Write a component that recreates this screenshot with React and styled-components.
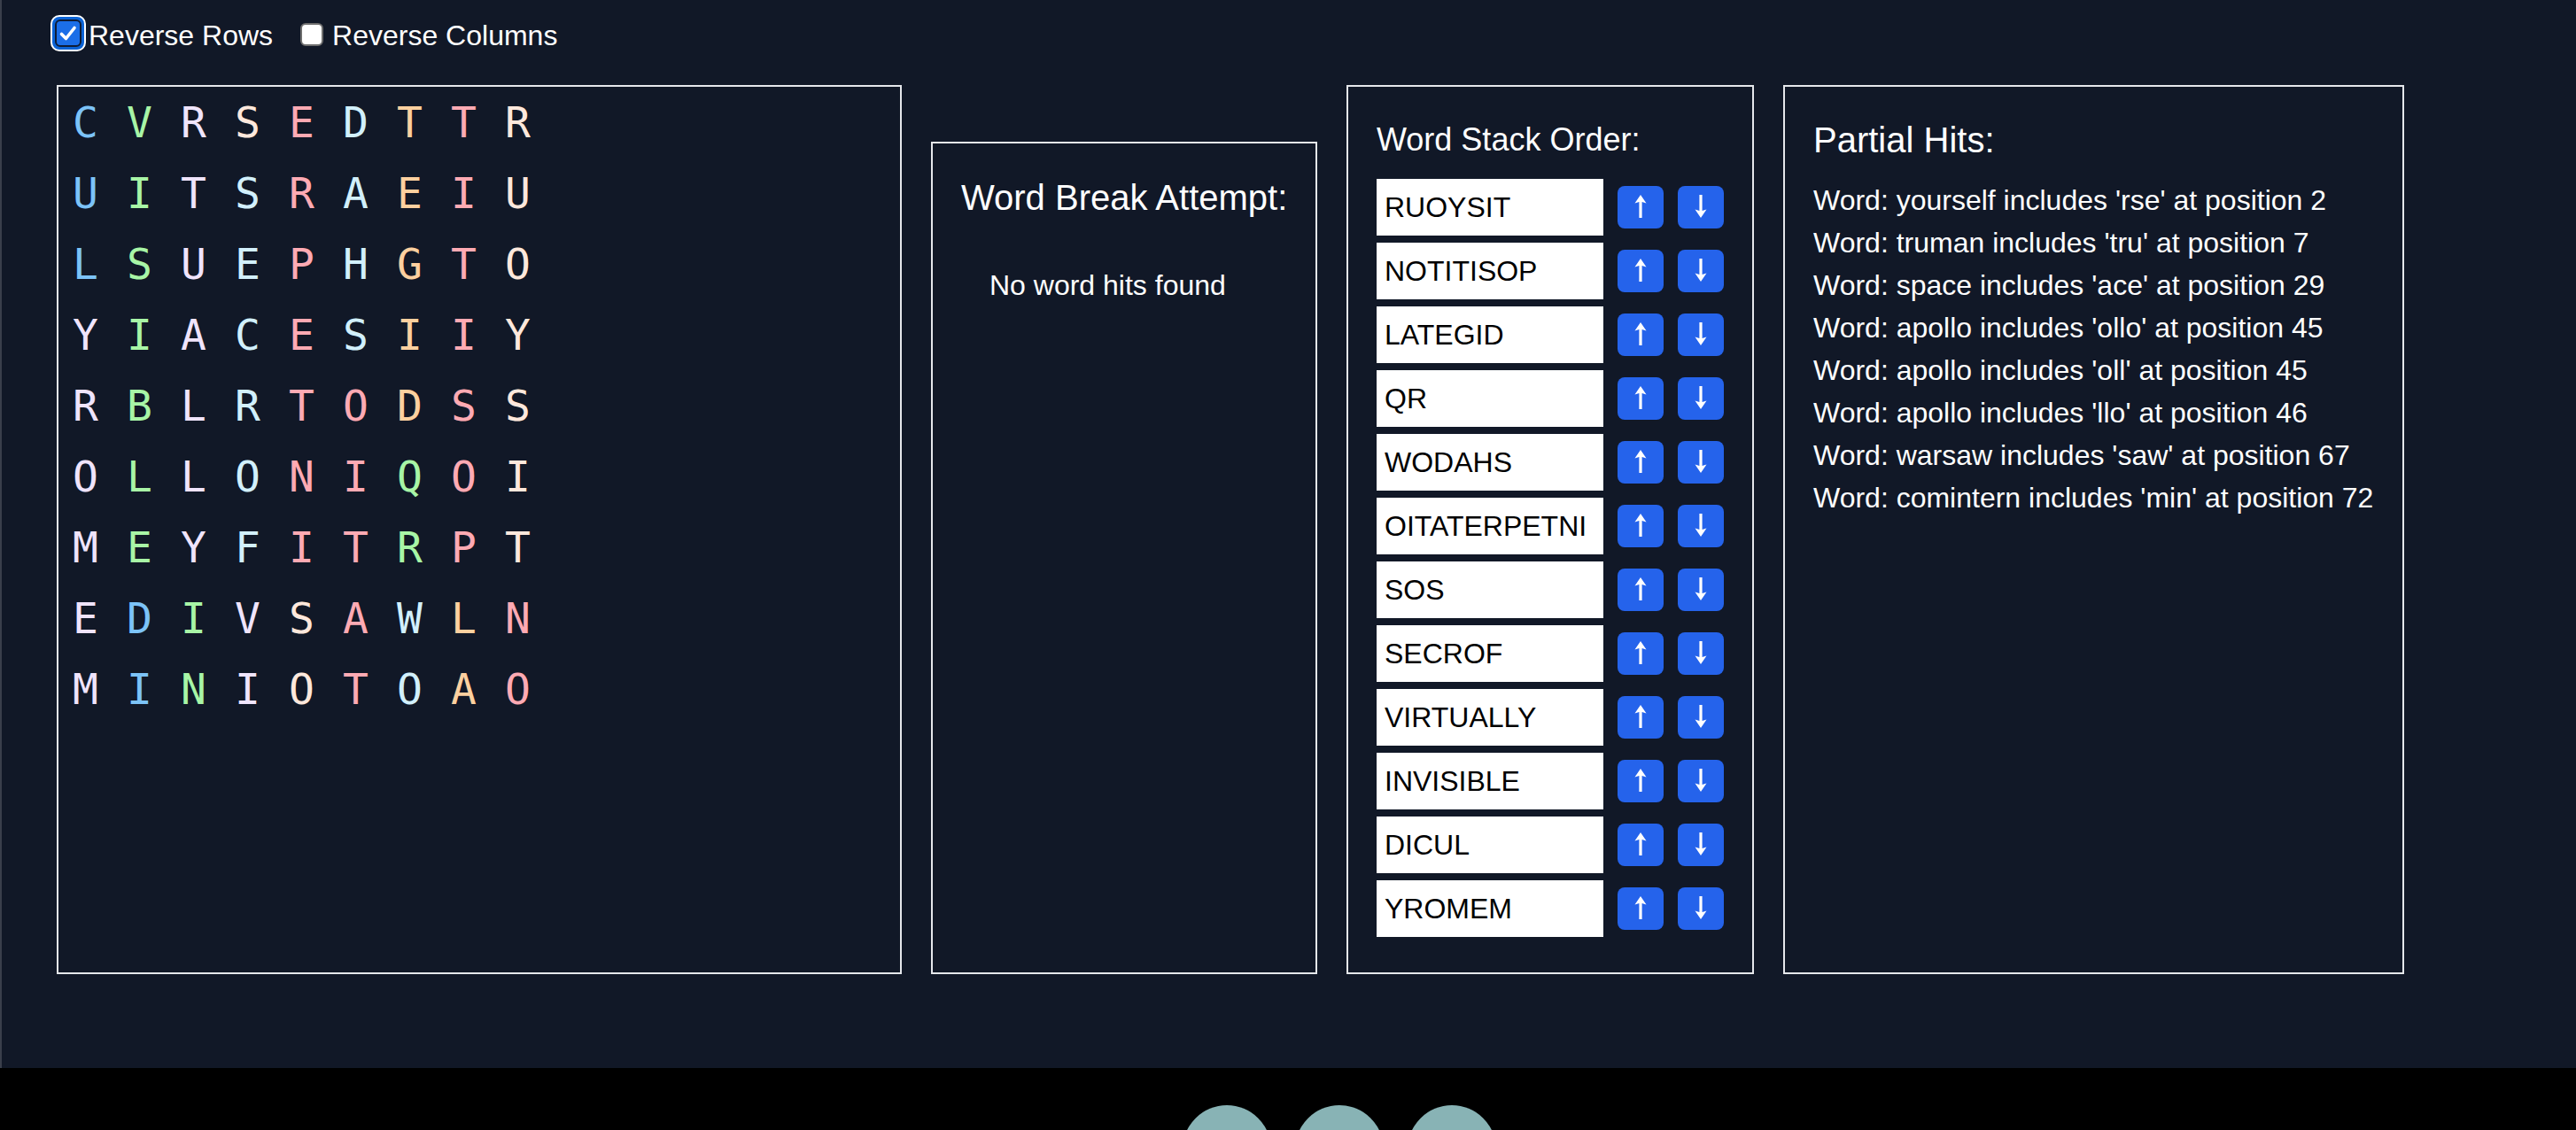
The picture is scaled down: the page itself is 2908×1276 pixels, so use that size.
import React from "react";
import styled, { createGlobalStyle } from "styled-components";

const GlobalStyle = createGlobalStyle`
  html, body { margin: 0; padding: 0; background: #000; }
  body { font-family: "Liberation Sans", Arial, sans-serif; }
  * { box-sizing: border-box; }
`;

const Page = styled.div`
  min-height: 1206px;
  background: #111827;
  border-left: 2px solid #3a3f4b;
  color: #ffffff;
`;

const Toolbar = styled.div`
  display: flex;
  align-items: center;
  padding: 17px 0 0 55px;
  height: 58px;
`;

const Option = styled.label`
  display: inline-flex;
  align-items: center;
  gap: ${(p) => p.$gap}px;
  margin-right: ${(p) => p.$mr || 0}px;
  font-size: 32px;
  line-height: 32px;
  color: #ffffff;
`;

const OptionText = styled.span`
  padding-top: 4px;
`;

const FocusBox = styled.span`
  width: 40px;
  height: 41px;
  border-radius: 10px;
  border: 2px solid #ffffff;
  background: #0b63d6;
  display: flex;
  align-items: center;
  justify-content: center;
`;

const CheckedBox = styled.span`
  width: 30px;
  height: 31px;
  border-radius: 6px;
  border: 2px solid #0f1c35;
  background: #1b6ee8;
  display: flex;
  align-items: center;
  justify-content: center;
`;

const EmptyBox = styled.span`
  width: 26px;
  height: 26px;
  border-radius: 6px;
  border: 2px solid #6e6e6e;
  background: #ffffff;
  margin-top: 2px;
`;

const PanelRow = styled.div`
  display: flex;
  align-items: stretch;
  gap: 33px;
  height: 1004px;
  margin-top: 38px;
  padding-left: 62px;
`;

const Panel = styled.section`
  width: ${(p) => p.$w}px;
  margin-top: ${(p) => p.$mt || 0}px;
  border: 2px solid #e5e7eb;
  padding: ${(p) => (p.$flush ? "0" : "32px")};
  flex-shrink: 0;
`;

const GridRow = styled.div`
  display: flex;
  height: 80px;
`;

const Cell = styled.span`
  width: 61px;
  text-align: center;
  font-family: "DejaVu Sans Mono", monospace;
  font-size: 48px;
  line-height: 80px;
  color: ${(p) => p.$c};
`;

const Heading = styled.h3`
  margin: ${(p) => p.$m};
  font-size: ${(p) => p.$size}px;
  line-height: ${(p) => p.$lh}px;
  font-weight: 400;
  color: #ffffff;
  white-space: nowrap;
`;

const Note = styled.p`
  margin: 0;
  padding-left: 32px;
  font-size: 32px;
  line-height: 48px;
  color: #ffffff;
`;

const StackList = styled.div`
  display: flex;
  flex-direction: column;
  gap: 8px;
`;

const StackRow = styled.div`
  display: flex;
  align-items: center;
  gap: 16px;
`;

const WordInput = styled.input`
  width: 256px;
  height: 64px;
  border: none;
  outline: none;
  background: #ffffff;
  color: #000000;
  padding: 0 9px;
  font-family: "Liberation Sans", Arial, sans-serif;
  font-size: 32px;
`;

const ArrowButton = styled.button`
  width: 53px;
  height: 48px;
  border: none;
  border-radius: 8px;
  background: #2563eb;
  padding: 0 0 3px 0;
  display: flex;
  align-items: center;
  justify-content: center;
`;

const HitLine = styled.div`
  font-size: 32px;
  line-height: 48px;
  color: #ffffff;
  white-space: nowrap;
`;

const Footer = styled.div`
  height: 70px;
  background: #000000;
  display: flex;
  gap: 27px;
  padding: 42px 0 0 1335px;
  overflow: hidden;
`;

const Dot = styled.span`
  width: 100px;
  height: 100px;
  border-radius: 50%;
  background: #88b3b5;
  flex-shrink: 0;
`;

const Arrow = ({ down }) => (
  <svg
    width="16"
    height="26"
    viewBox="0 0 16 26"
    style={down ? { transform: "rotate(180deg)" } : undefined}
  >
    <polygon
      points="8,0 14.5,9.5 9.6,8 9.6,26 6.4,26 6.4,8 1.5,9.5"
      fill="#ffffff"
    />
  </svg>
);

const PAL = {
  B: "#7cc3f8",
  G: "#a8f5a6",
  L: "#f0e4fc",
  W: "#ffe8dc",
  P: "#ffaab3",
  C: "#d2f0fc",
  O: "#fdd09f",
};

const GRID = [
  ["CVRSEDTTR", "BGLWPCOPW"],
  ["UITSRAEIU", "BGLCPCOPW"],
  ["LSUEPHGTO", "BGLCPCOPW"],
  ["YIACESIIY", "LGLCPCOPW"],
  ["RBLRTODSS", "LGLCPPOPW"],
  ["OLLONIQOI", "LGLCPPGPW"],
  ["MEYFITRPT", "LGLCPPGPW"],
  ["EDIVSAWLN", "LBGLWPCOP"],
  ["MINIOTOAO", "LBGLWPCOP"],
];

const STACK = [
  "RUOYSIT",
  "NOTITISOP",
  "LATEGID",
  "QR",
  "WODAHS",
  "OITATERPETNI",
  "SOS",
  "SECROF",
  "VIRTUALLY",
  "INVISIBLE",
  "DICUL",
  "YROMEM",
];

const HITS = [
  "Word: yourself includes 'rse' at position 2",
  "Word: truman includes 'tru' at position 7",
  "Word: space includes 'ace' at position 29",
  "Word: apollo includes 'ollo' at position 45",
  "Word: apollo includes 'oll' at position 45",
  "Word: apollo includes 'llo' at position 46",
  "Word: warsaw includes 'saw' at position 67",
  "Word: comintern includes 'min' at position 72",
];

export default function App() {
  return (
    <>
      <GlobalStyle />
      <Page>
        <Toolbar>
          <Option $gap={3} $mr={31}>
            <FocusBox>
              <CheckedBox>
                <svg width="24" height="24" viewBox="0 0 24 24">
                  <path
                    d="M4.5 12.5 L9.5 17.5 L19 5.5"
                    fill="none"
                    stroke="#ffffff"
                    strokeWidth="3.6"
                    strokeLinecap="round"
                    strokeLinejoin="round"
                  />
                </svg>
              </CheckedBox>
            </FocusBox>
            <OptionText>Reverse Rows</OptionText>
          </Option>
          <Option $gap={10}>
            <EmptyBox />
            <OptionText>Reverse Columns</OptionText>
          </Option>
        </Toolbar>

        <PanelRow>
          <Panel $w={954} $flush>
            {GRID.map(([letters, colors], r) => (
              <GridRow key={r}>
                {letters.split("").map((ch, i) => (
                  <Cell key={i} $c={PAL[colors[i]]}>
                    {ch}
                  </Cell>
                ))}
              </GridRow>
            ))}
          </Panel>

          <Panel $w={436} $mt={64}>
            <Heading $size={40} $lh={48} $m="5px 0 51px">
              Word Break Attempt:
            </Heading>
            <Note>No word hits found</Note>
          </Panel>

          <Panel $w={460}>
            <Heading $size={36} $lh={40} $m="8px 0 24px">
              Word Stack Order:
            </Heading>
            <StackList>
              {STACK.map((w) => (
                <StackRow key={w}>
                  <WordInput value={w} readOnly />
                  <ArrowButton aria-label="Move up">
                    <Arrow />
                  </ArrowButton>
                  <ArrowButton aria-label="Move down">
                    <Arrow down />
                  </ArrowButton>
                </StackRow>
              ))}
            </StackList>
          </Panel>

          <Panel $w={701}>
            <Heading $size={40} $lh={48} $m="4px 0 20px">
              Partial Hits:
            </Heading>
            {HITS.map((h, i) => (
              <HitLine key={i}>{h}</HitLine>
            ))}
          </Panel>
        </PanelRow>
      </Page>
      <Footer>
        <Dot />
        <Dot />
        <Dot />
      </Footer>
    </>
  );
}
